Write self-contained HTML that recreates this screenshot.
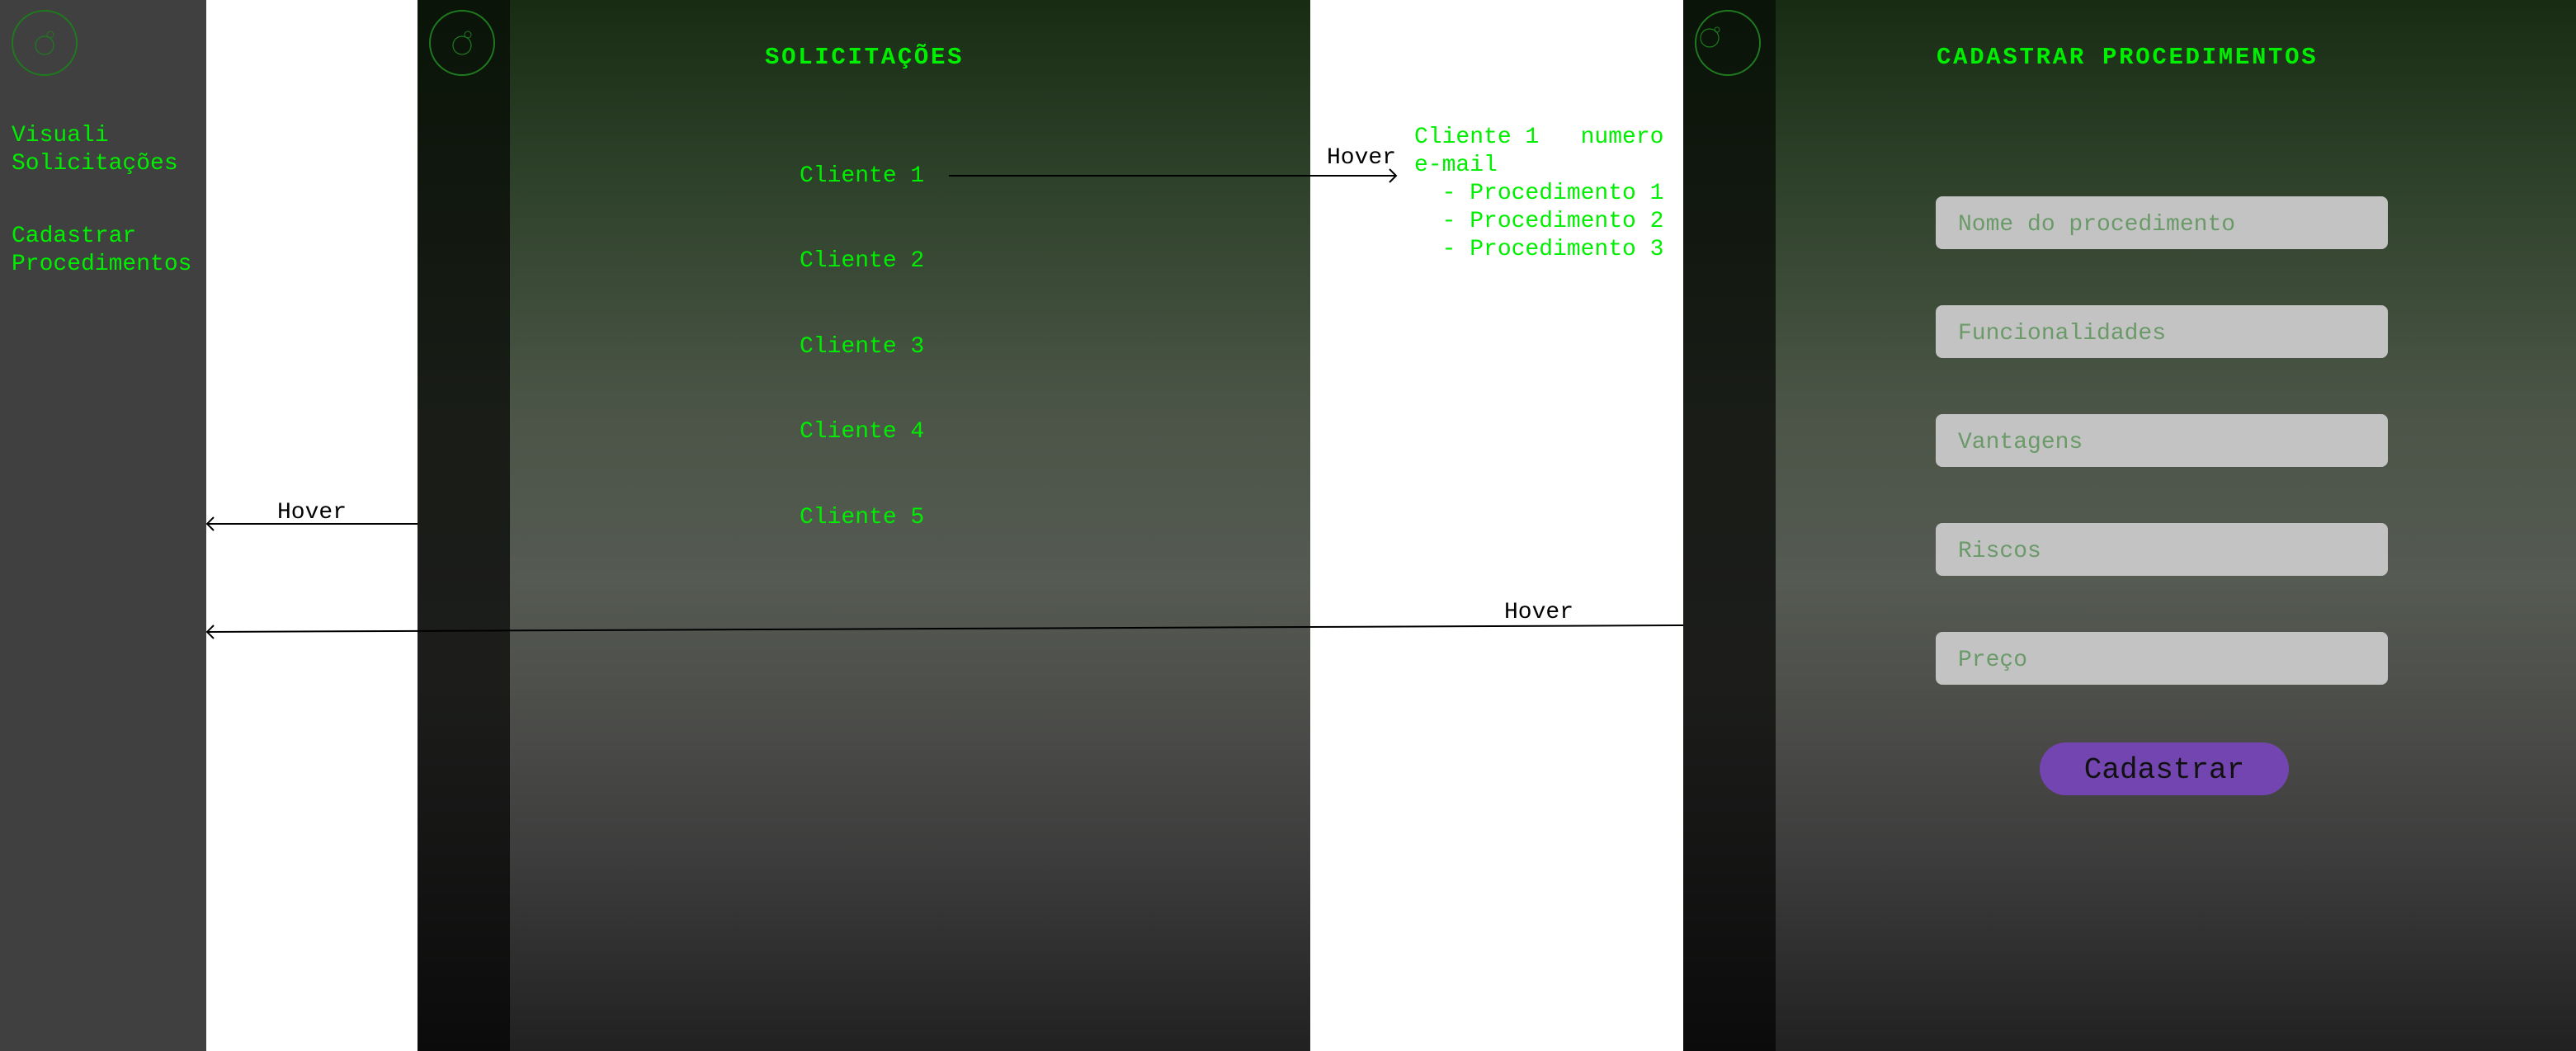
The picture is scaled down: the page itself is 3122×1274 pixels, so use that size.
<!DOCTYPE html>
<html><head><meta charset="utf-8"><style>
*{margin:0;padding:0;box-sizing:border-box}
body{width:3122px;height:1274px;position:relative;background:#fff;overflow:hidden;font-family:"Liberation Mono","DejaVu Sans Mono",monospace}
.a{position:absolute;white-space:pre}
.g{color:#00ee00;font-size:28px}
.side1{position:absolute;left:0;top:0;width:250px;height:1274px;background:#404040}
.sb{position:absolute;top:0;height:1274px;background:linear-gradient(#0a1408 0%,#191c17 40%,#1c1d1b 65%,#0b0b0b 100%)}
.main{position:absolute;top:0;height:1274px;background:linear-gradient(#182c14 0%,#2f422b 18%,#4a5446 38%,#555a52 55%,#4a4b48 70%,#3c3c3c 82%,#212121 100%)}
.t{font-weight:bold;font-size:29px;letter-spacing:2.7px;color:#00ee00}
.inp{position:absolute;left:2346px;width:548px;height:64px;background:#c3c3c3;border-radius:8px;color:#6a9a68;font-size:28px;line-height:64px;padding-left:27px;padding-top:3px}
.h{color:#000;font-size:28px}
</style></head><body>
<div class="side1"></div>
<div class="sb" style="left:506px;width:112px"></div>
<div class="main" style="left:618px;width:970px"></div>
<div class="sb" style="left:2040px;width:112px"></div>
<div class="main" style="left:2152px;width:970px"></div>

<svg class="a" style="left:0;top:0" width="3122" height="1274">
<g fill="none" stroke="#1f7a1f" stroke-width="2">
<circle cx="54" cy="52" r="39"/><circle cx="54" cy="55" r="11" stroke-width="1.2"/><circle cx="61" cy="42" r="4" stroke-width="1"/>
<circle cx="560" cy="52" r="39"/><circle cx="560" cy="55" r="11" stroke-width="1.2"/><circle cx="567" cy="42" r="4" stroke-width="1"/>
<circle cx="2094" cy="52" r="39"/><circle cx="2072" cy="46" r="11" stroke-width="1.2"/><circle cx="2081" cy="36" r="3" stroke-width="1"/>
</g>
<g stroke="#000" stroke-width="2" fill="none">
<line x1="1150" y1="213" x2="1692" y2="213"/><polyline points="1684,205 1692,213 1684,221"/>
<line x1="506" y1="635" x2="251" y2="635"/><polyline points="259,627 251,635 259,643"/>
<line x1="2040" y1="758" x2="251" y2="766"/><polyline points="259,758 251,766 259,774"/>
</g>
</svg>

<div class="a g" style="left:14px;top:148px;line-height:34px">Visuali
Solicitações</div>
<div class="a g" style="left:14px;top:270px;line-height:34px">Cadastrar
Procedimentos</div>

<div class="a t" style="left:927px;top:53px">SOLICITAÇÕES</div>
<div class="a g" style="left:969px;top:198px">Cliente 1</div>
<div class="a g" style="left:969px;top:301px">Cliente 2</div>
<div class="a g" style="left:969px;top:405px">Cliente 3</div>
<div class="a g" style="left:969px;top:508px">Cliente 4</div>
<div class="a g" style="left:969px;top:612px">Cliente 5</div>

<div class="a h" style="left:1608px;top:176px">Hover</div>
<div class="a g" style="left:1714px;top:150px;line-height:34px">Cliente 1   numero
e-mail
  - Procedimento 1
  - Procedimento 2
  - Procedimento 3</div>

<div class="a h" style="left:336px;top:606px">Hover</div>
<div class="a h" style="left:1823px;top:727px">Hover</div>

<div class="a t" style="left:2347px;top:53px">CADASTRAR PROCEDIMENTOS</div>
<div class="inp" style="top:238px">Nome do procedimento</div>
<div class="inp" style="top:370px">Funcionalidades</div>
<div class="inp" style="top:502px">Vantagens</div>
<div class="inp" style="top:634px">Riscos</div>
<div class="inp" style="top:766px">Preço</div>
<div class="a" style="left:2472px;top:900px;width:302px;height:64px;border-radius:32px;background:#7245b0;color:#111;font-size:36px;line-height:64px;text-align:center;padding-top:2px">Cadastrar</div>
</body></html>
